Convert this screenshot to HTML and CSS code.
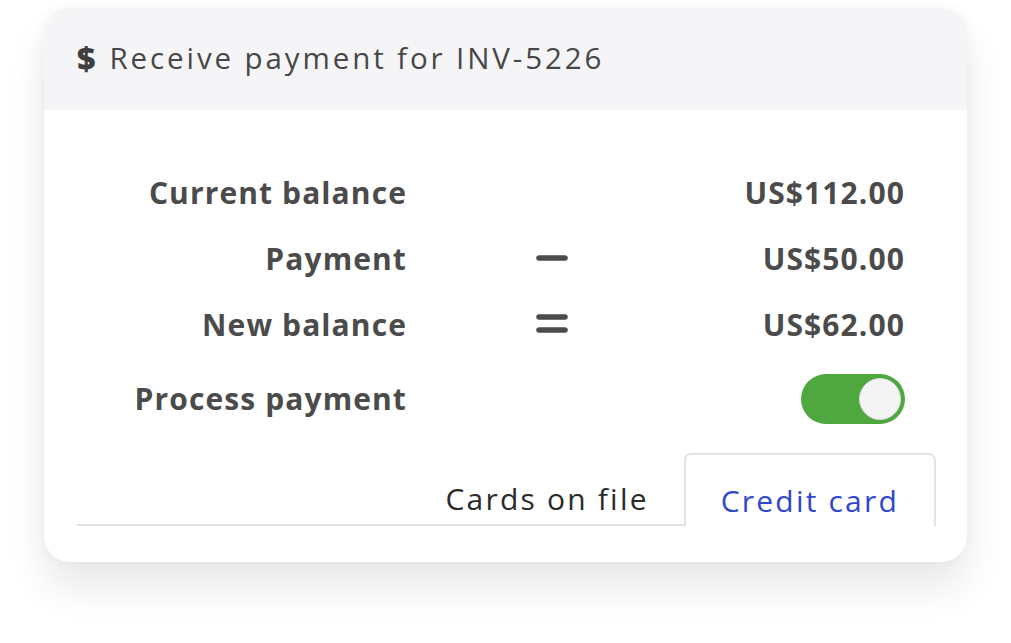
FILE: index.html
```html
<!DOCTYPE html>
<html lang="en">
<head>
  <meta charset="UTF-8">
  <meta name="viewport" content="width=device-width, initial-scale=1.0">
  <title>Receive payment</title>
  <link rel="stylesheet" href="styles.css">
</head>
<body>
  <div class="card">
    <div class="card-header">
      <span class="dollar">$</span>
      <h2>Receive payment for INV-5226</h2>
    </div>

    <div class="card-body">
      <div class="summary">
        <div class="label">Current balance</div>
        <div class="op"></div>
        <div class="value">US$112.00</div>

        <div class="label">Payment</div>
        <div class="op">
          <svg width="32" height="8" viewBox="0 0 32 8"><line x1="3" y1="4" x2="29" y2="4" stroke="#4b4b4b" stroke-width="5.5" stroke-linecap="round"/></svg>
        </div>
        <div class="value">US$50.00</div>

        <div class="label">New balance</div>
        <div class="op">
          <svg width="32" height="22" viewBox="0 0 32 22"><line x1="3" y1="4" x2="29" y2="4" stroke="#4b4b4b" stroke-width="5.5" stroke-linecap="round"/><line x1="3" y1="17" x2="29" y2="17" stroke="#4b4b4b" stroke-width="5.5" stroke-linecap="round"/></svg>
        </div>
        <div class="value">US$62.00</div>

        <div class="label process">Process payment</div>
        <div class="op process"></div>
        <div class="value process">
          <div class="toggle on"><div class="knob"></div></div>
        </div>
      </div>

      <div class="tabs">
        <div class="tab">Cards on file</div>
        <div class="tab active">Credit card</div>
      </div>
    </div>
  </div>
</body>
</html>
```

FILE: styles.css
```css
body {
  margin: 0;
  padding: 8px 0 80px;
  background-color: white;
  font-family: "Open Sans", "Liberation Sans", sans-serif;
  color: #4b4b4b;
}
.card {
  width: 923px;
  height: 554px;
  margin-left: 44px;
  background-color: white;
  border-radius: 26px;
  overflow: hidden;
  box-shadow: 0 26px 40px rgba(0,0,0,0.09), 0 0 14px rgba(0,0,0,0.04);
}
.card-header {
  height: 98px;
  padding-bottom: 4px;
  background-color: #f5f5f7;
  display: flex;
  align-items: center;
  padding-left: 33px;
  gap: 14px;
}
.dollar {
  font-size: 32px;
  font-weight: 800;
  color: #3f3f3f;
}
.card-header h2 {
  margin: 0;
  font-size: 29.5px;
  font-weight: 500;
  letter-spacing: 2.9px;
  color: #474747;
}
.card-body {
  padding: 49px 31px 34px 33px;
}
.summary {
  display: grid;
  grid-template-columns: 330px 290px 1fr;
  grid-auto-rows: 66px;
  align-items: center;
  padding-right: 31px;
  font-size: 30px;
  font-weight: 700;
  letter-spacing: 1.1px;
}
.label {
  text-align: right;
}
.op {
  display: flex;
  justify-content: center;
}
.value {
  text-align: right;
}
.process {
  margin-top: 17px;
}
.toggle {
  display: inline-flex;
  justify-content: flex-end;
  align-items: center;
  width: 104px;
  height: 50px;
  box-sizing: border-box;
  padding: 4px;
  border-radius: 25px;
  background-color: #4fa83f;
  vertical-align: middle;
}
.knob {
  width: 42px;
  height: 42px;
  box-sizing: border-box;
  border: 1px solid #dcdcdc;
  border-radius: 50%;
  background-color: #f4f4f4;
}
.tabs {
  display: flex;
  justify-content: flex-end;
  margin-top: 30px;
  border-bottom: 2px solid #e1e2e7;
}
.tab {
  padding: 0 35px;
  height: 71px;
  line-height: 92px;
  font-size: 30px;
  letter-spacing: 2.2px;
  color: #2b2b2b;
}
.tab.active {
  color: #2f47cf;
  background-color: white;
  border: 2px solid #e1e2e7;
  border-bottom: none;
  border-radius: 7px 7px 0 0;
  margin-bottom: -2px;
}
```
